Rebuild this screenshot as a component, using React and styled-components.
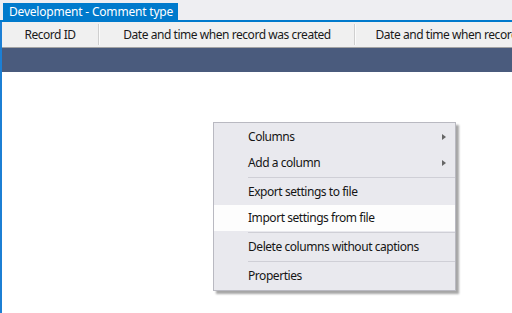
import React from "react";
import styled, { createGlobalStyle } from "styled-components";

const Global = createGlobalStyle`
  html, body { margin: 0; padding: 0; }
  body {
    width: 512px;
    height: 313px;
    overflow: hidden;
    background: #ffffff;
    font-family: "Noto Sans", "Open Sans", sans-serif;
    font-size: 12px;
    letter-spacing: -0.45px;
  }
`;

const Window = styled.div`
  position: relative;
  width: 512px;
  height: 313px;
  display: flex;
  flex-direction: column;
  background: #eeeef2;
`;

const TabStrip = styled.div`
  display: flex;
  padding: 3px 0 0 3px;
  border-bottom: 2px solid #007acc;
  height: 17px;
`;

const Tab = styled.div`
  background: #007acc;
  color: #ffffff;
  padding: 0 5px 0 6px;
  line-height: 17px;
  letter-spacing: -0.2px;
  white-space: nowrap;
`;

const Panel = styled.div`
  flex: 1;
  display: flex;
  flex-direction: column;
  border-left: 2px solid #1c7fd4;
  background: #ffffff;
`;

const HeaderRow = styled.div`
  display: flex;
  align-items: center;
  height: 25px;
  background: #f0f0f0;
  border-bottom: 1px solid #a3a3a3;
  overflow: hidden;
  white-space: nowrap;
`;

const HeaderCell = styled.div`
  flex: 0 0 ${(p) => p.$w}px;
  text-align: center;
  color: #1a1a1a;
`;

const Divider = styled.div`
  flex: 0 0 1px;
  height: 21px;
  background: #cfcfcf;
  border-right: 1px solid #fbfbfb;
`;

const Band = styled.div`
  height: 24px;
  background: #4a5b7d;
`;

const Body = styled.div`
  flex: 1;
  background: #ffffff;
`;

const Menu = styled.div`
  position: absolute;
  left: 213px;
  top: 122px;
  width: 241px;
  padding: 1px 0 1px;
  background: #e9e9ee;
  border: 1px solid #b9b9c1;
  box-shadow: 3px 3px 2px rgba(0, 0, 0, 0.35);
  color: #151515;
`;

const Item = styled.div`
  position: relative;
  height: 26px;
  line-height: 26px;
  padding-left: 34px;
  background: ${(p) => (p.$hot ? "#fdfdfd" : "transparent")};
  white-space: nowrap;
`;

const Arrow = styled.span`
  position: absolute;
  right: 9px;
  top: 10px;
  width: 0;
  height: 0;
  border-top: 3.5px solid transparent;
  border-bottom: 3.5px solid transparent;
  border-left: 4px solid #666;
`;

const Sep = styled.div`
  height: 3px;
  margin-left: 34px;
  display: flex;
  align-items: center;
  &::after {
    content: "";
    flex: 1;
    height: 1px;
    background: #cfcfd6;
  }
`;

const App = () => {
  return (
    <Window>
      <Global />
      <TabStrip>
        <Tab>Development - Comment type</Tab>
      </TabStrip>
      <Panel>
        <HeaderRow>
          <HeaderCell $w={96}>Record ID</HeaderCell>
          <Divider />
          <HeaderCell $w={254}>Date and time when record was created</HeaderCell>
          <Divider />
          <HeaderCell $w={254}>Date and time when record was modified</HeaderCell>
        </HeaderRow>
        <Band />
        <Body />
      </Panel>
      <Menu>
        <Item>
          Columns
          <Arrow />
        </Item>
        <Item>
          Add a column
          <Arrow />
        </Item>
        <Sep />
        <Item>Export settings to file</Item>
        <Item $hot>Import settings from file</Item>
        <Sep />
        <Item>Delete columns without captions</Item>
        <Sep />
        <Item>Properties</Item>
      </Menu>
    </Window>
  );
};

export default App;
